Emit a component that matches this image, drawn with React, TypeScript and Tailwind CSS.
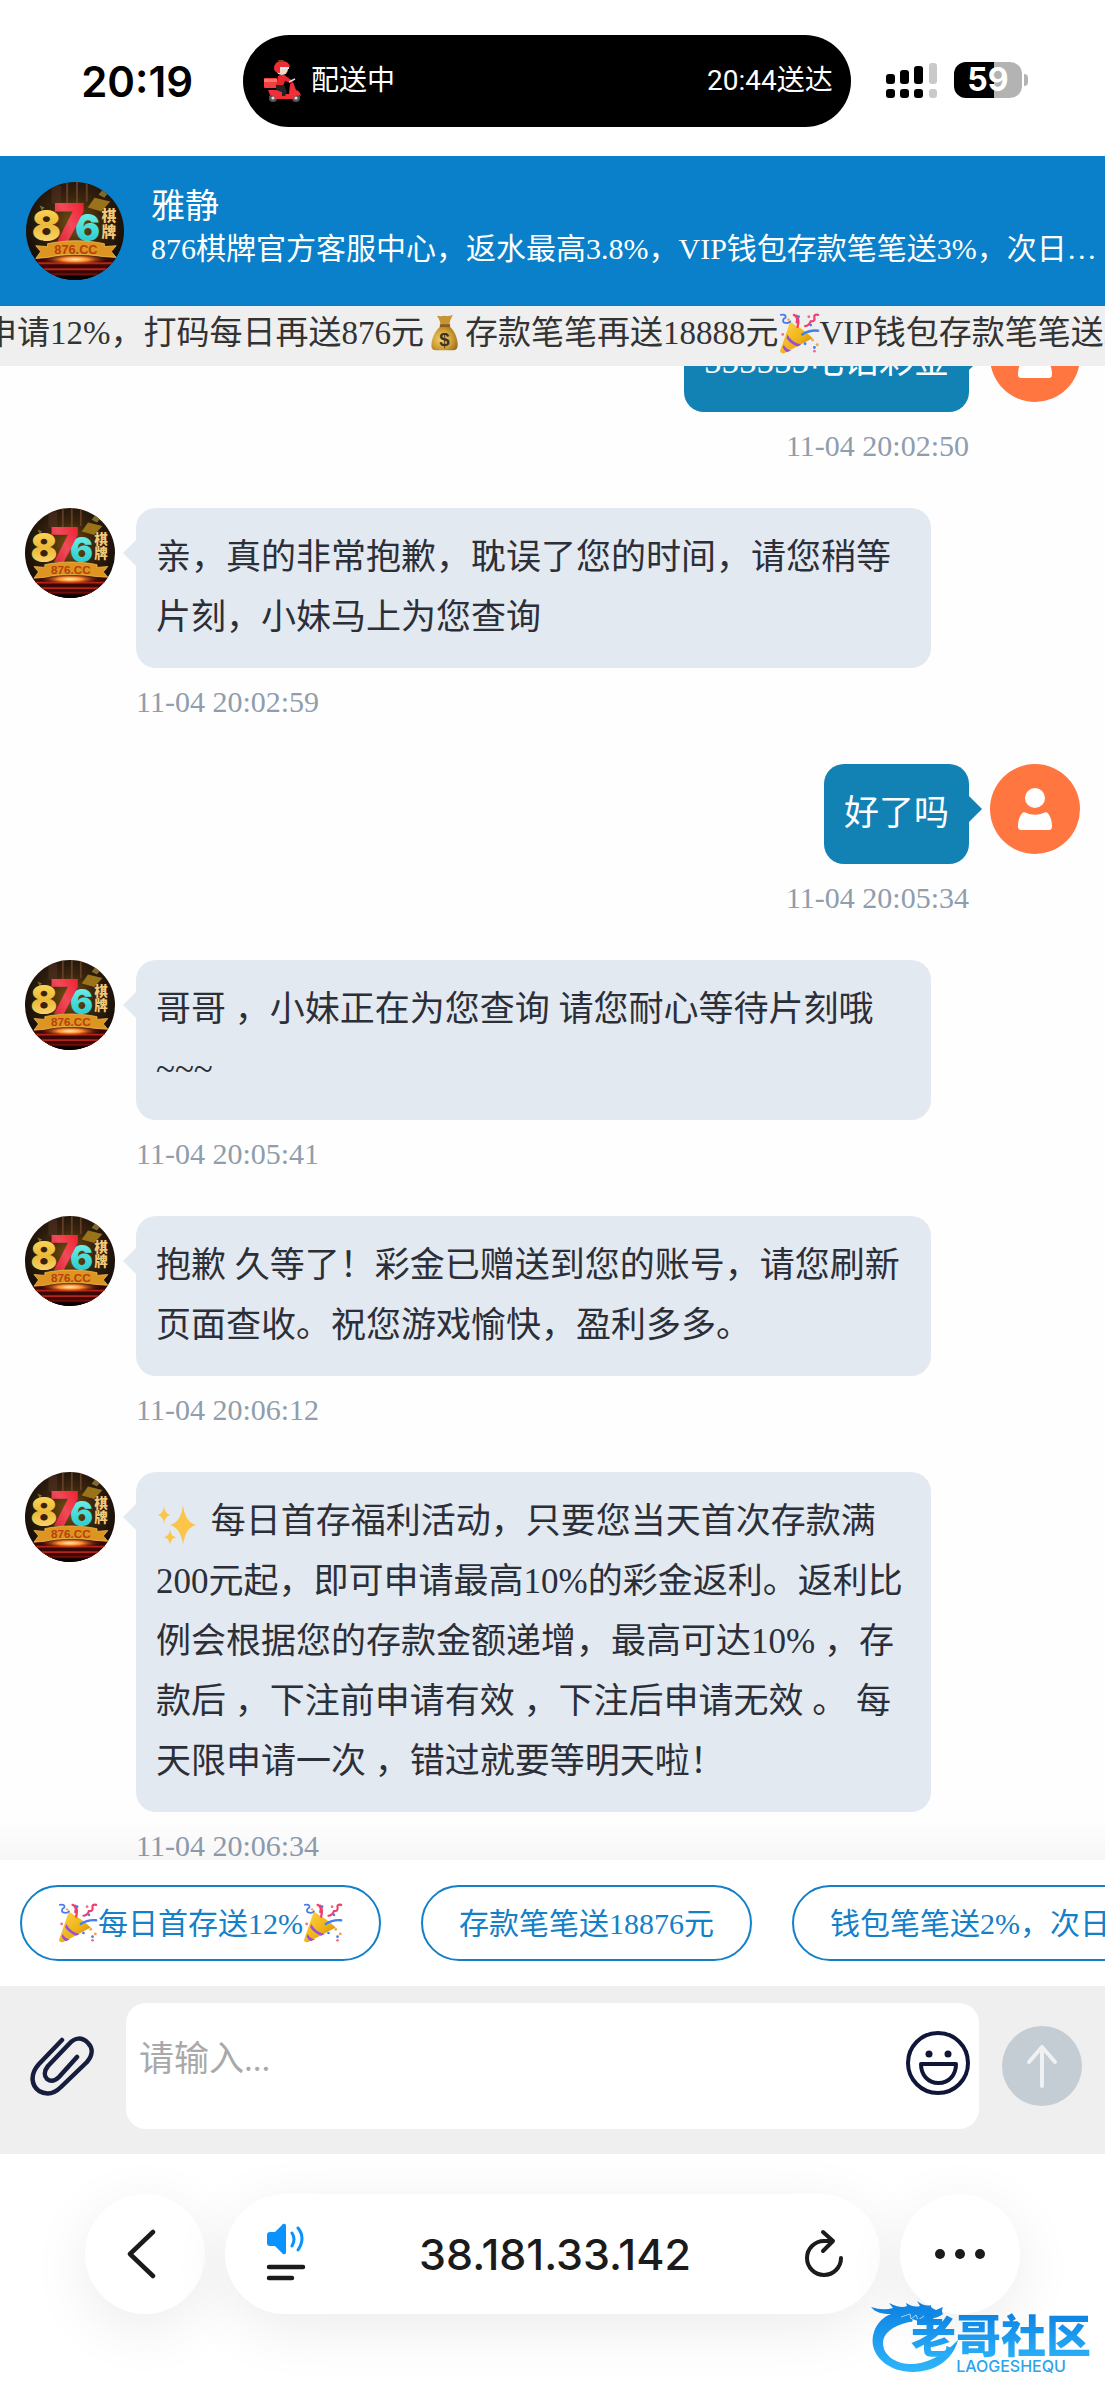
import React from "react";

const SERIF = "font-['Liberation_Serif','Noto_Sans_CJK_SC',serif]";
const SANS = "font-['Inter','Noto_Sans_CJK_SC',sans-serif]";

function BrandAvatar({ className }: { className: string }) {
  return (
    <svg viewBox="10 10 100 100" className={`shrink-0 rounded-full ${className}`} role="img" aria-label="876棋牌">
      <defs>
        <radialGradient id="av-bg" cx="50%" cy="42%" r="60%">
          <stop offset="0" stopColor="#7a5510" />
          <stop offset="0.45" stopColor="#3a240e" />
          <stop offset="1" stopColor="#0d0908" />
        </radialGradient>
        <linearGradient id="av-gold" x1="0" y1="0" x2="0" y2="1">
          <stop offset="0" stopColor="#ffe66a" />
          <stop offset="0.5" stopColor="#ecb838" />
          <stop offset="1" stopColor="#ffe68a" />
        </linearGradient>
        <linearGradient id="av-red" x1="1" y1="0" x2="0" y2="1">
          <stop offset="0" stopColor="#f01226" />
          <stop offset="0.5" stopColor="#f04a58" />
          <stop offset="1" stopColor="#d8122c" />
        </linearGradient>
        <linearGradient id="av-cyan" x1="0" y1="0" x2="0" y2="1">
          <stop offset="0" stopColor="#7ff5ea" />
          <stop offset="1" stopColor="#17c3cc" />
        </linearGradient>
        <radialGradient id="av-glow" cx="50%" cy="50%" r="50%">
          <stop offset="0" stopColor="#fff0b0" />
          <stop offset="0.4" stopColor="#ff8a2a" />
          <stop offset="1" stopColor="#7a1208" stopOpacity="0" />
        </radialGradient>
      </defs>
      <rect x="10" y="10" width="100" height="100" fill="url(#av-bg)" />
      <path d="M52 10v24M62 10v22M72 10v20" stroke="#7b4a30" strokeWidth="2" opacity="0.7" />
      <path d="M36 14h10v18H36z" fill="#5a3326" opacity="0.5" />
      <path d="M80 26l16 4-9 10-14-4z" fill="#9a7318" />
      <path d="M88 18l6 3-4 5-6-3zM24 34l5 2-3 3z" fill="#7d6a2a" />
      <rect x="10" y="88" width="100" height="22" fill="#3a0705" />
      <path d="M20 93h80M22 99h76" stroke="#b5241a" strokeWidth="2" />
      <path d="M28 104h64" stroke="#6d100c" strokeWidth="2" />
      <rect x="10" y="106" width="100" height="5" fill="#060303" />
      <ellipse cx="60" cy="89" rx="34" ry="6" fill="url(#av-glow)" />
      <text x="16" y="70" fontSize="44" fontWeight="900" fill="url(#av-gold)" className="font-['Inter',sans-serif]">8</text>
      <text x="60" y="70" fontSize="38" fontWeight="900" fill="url(#av-cyan)" className="font-['Inter',sans-serif]">6</text>
      <text x="38" y="70" fontSize="54" fontWeight="900" fill="url(#av-red)" className="font-['Inter',sans-serif]">7</text>
      <text x="87" y="50" fontSize="15" fontWeight="900" fill="#f3c878" className="font-['Noto_Sans_CJK_SC',sans-serif]">棋</text>
      <text x="87" y="66" fontSize="15" fontWeight="900" fill="#f3c878" className="font-['Noto_Sans_CJK_SC',sans-serif]">牌</text>
      <path d="M20 75l12 1v-3c18-4 40-4 58 0v3l12-1-5 6 5 6-14-1c-18-3-40-3-56 1l-12 1 5-7z" fill="#dd9420" stroke="#f7c85a" strokeWidth="0.8" />
      <text x="61" y="83" textAnchor="middle" fontSize="13" fontWeight="900" fill="#b8400c" className="font-['Liberation_Sans',sans-serif]">876.CC</text>
    </svg>
  );
}

function UserAvatar() {
  return (
    <svg viewBox="0 0 90 90" className="size-[90px] shrink-0 rounded-full" role="img" aria-label="我">
      <rect width="90" height="90" fill="#ff7640" />
      <circle cx="45" cy="34" r="10" fill="#fff" />
      <path d="M33 48.500c-3 2-5 8-5 14 0 2 1 3.500 3 3.500h28c2 0 3-1.500 3-3.500 0-6-2-12-5-14-1-.6-2-.4-3 .3-5 2.600-13 2.600-18 0-1-.7-2-.9-3-.3z" fill="#fff" />
    </svg>
  );
}

function PartyPopper({ className }: { className: string }) {
  return (
    <svg viewBox="0 0 44 44" className={`shrink-0 ${className}`} role="img" aria-label="庆祝">
      <defs>
        <linearGradient id="pp-cone" x1="0" y1="0" x2="1" y2="1">
          <stop offset="0" stopColor="#ffd84a" />
          <stop offset="0.6" stopColor="#eeb016" />
          <stop offset="1" stopColor="#b97a10" />
        </linearGradient>
      </defs>
      <path d="M12 9Q18 14 24 17Q32 23 36 27L6 43Q2 44 1 41Z" fill="url(#pp-cone)" />
      <path d="M9 23Q14 32 24 34l-4 2Q12 33 8 27zM5 34q3 5 8 6l-4 2q-3-1-5-5z" fill="#9a4fd8" />
      <path d="M2 2q6-1 5 3-4 2-2 5 5 2 7-1" fill="none" stroke="#4a7bea" strokeWidth="2" strokeLinecap="round" />
      <path d="M16 2q5 2 3 8M19 3q3 4 1 12" fill="none" stroke="#ef3f6a" strokeWidth="2.500" strokeLinecap="round" />
      <path d="M42 2q-5-1-4 3t-4 4q-2 5-6 5" fill="none" stroke="#ef3f6a" strokeWidth="2.400" strokeLinecap="round" />
      <path d="M25 23q8-5 17-4" fill="none" stroke="#3f7fef" strokeWidth="2.600" strokeLinecap="round" />
      <g fill="#4a7bea"><circle cx="21" cy="4" r="1.500" /><circle cx="34" cy="13" r="1.500" /><circle cx="28" cy="33" r="1.500" /><circle cx="38" cy="37" r="1.500" /></g>
      <g fill="#f06a94"><circle cx="32" cy="4" r="1.500" /><circle cx="4" cy="23" r="1.500" /><circle cx="38" cy="41" r="1.500" /></g>
      <g fill="#f5a54a"><circle cx="36" cy="29" r="1.600" /><circle cx="41" cy="34" r="1.600" /><circle cx="10" cy="7" r="1.300" /></g>
    </svg>
  );
}

function MoneyBag() {
  return (
    <svg viewBox="0 0 44 44" className="size-[41px] shrink-0" role="img" aria-label="钱袋">
      <defs>
        <radialGradient id="mb" cx="40%" cy="55%" r="65%">
          <stop offset="0" stopColor="#f2d46a" />
          <stop offset="0.600" stopColor="#cf9f38" />
          <stop offset="1" stopColor="#9a6d1c" />
        </radialGradient>
      </defs>
      <path d="M14 3q4 1 8 0 5 1 9-1-3 5-4 11h-9Q17 7 14 3z" fill="#c59434" />
      <path d="M18 14h9c6 5 10 15 9 22-.500 3-2 4-5 4H13c-3 0-4.500-1-5-4-.500-8 4-17 10-22z" fill="url(#mb)" />
      <path d="M17 12h11v3H17z" fill="#8d5f1c" />
      <text x="22" y="35" textAnchor="middle" fontSize="20" fontWeight="700" fill="#3d3426" className="font-['Liberation_Sans',sans-serif]">$</text>
    </svg>
  );
}

function Sparkles() {
  return (
    <svg viewBox="0 0 44 40" className="mr-0.5 inline-block h-10 w-11 align-middle" role="img" aria-label="闪光">
      <g fill="#fcc54a">
        <path d="M27 0q2 17 13 20-11 3-13 20-2-17-13-20Q25 17 27 0z" />
        <path d="M8 1q.500 7 6 9-5.500 2-6 9-.500-7-6-9 5.500-2 6-9z" />
        <path d="M14 24q.500 7 6 8-5.500 2-6 8-.500-6-6-8 5.500-1 6-8z" />
      </g>
    </svg>
  );
}

function Courier() {
  return (
    <svg viewBox="0 0 38 44" className="h-11 w-[38px] shrink-0" aria-hidden="true">
      <rect x="1" y="19" width="13" height="10" rx="1" fill="#f0403f" />
      <path d="M1 20h13v3H1z" fill="#ff7468" />
      <circle cx="10" cy="39" r="4" fill="#555" /><circle cx="10" cy="39" r="1.600" fill="#ddd" />
      <circle cx="33" cy="39" r="4" fill="#555" /><circle cx="33" cy="39" r="1.600" fill="#ddd" />
      <path d="M5 31h12l4 4h5l1-10 3-2 3 8q4 1 5 6-5-3-8 3H12q0-4-5-4z" fill="#ef3038" />
      <path d="M15 17q6-3 9 1l6 4-2 2-6-2-2 5h-7z" fill="#e8262e" />
      <path d="M13 26h8l3 7-2 4h-3v-4l-6-2z" fill="#222" />
      <ellipse cx="19" cy="10" rx="6" ry="6" fill="#f9d8c6" />
      <path d="M11 10q0-8 8-8 7 0 8 6l-10 0v6q-5 0-6-4z" fill="#ee2c33" />
      <path d="M17 8h9v2h-9z" fill="#dce9f0" />
      <path d="M15 1h6l-1 2h-4z" fill="#7a4a12" />
      <path d="M26 23l6-3" stroke="#ddd" strokeWidth="1.500" />
    </svg>
  );
}

function StatusBar() {
  return (
    <div className={`flex h-[156px] items-start text-black ${SANS}`}>
      <div className="flex w-[22%] justify-end pr-[50px] pt-[58px] text-[42px] leading-[48px] font-semibold">20:19</div>
      <div className="mt-[35px] flex h-[92px] w-[55%] items-center justify-between rounded-full bg-black pl-5 pr-[18px] text-[28px] text-white font-['Roboto','Noto_Sans_CJK_SC',sans-serif]">
        <span className="flex items-center gap-2.5"><Courier />配送中</span>
        <span>20:44送达</span>
      </div>
      <div className="flex flex-1 items-center gap-4 pl-[35px] pt-[62px]">
        <svg viewBox="0 0 52 36" className="h-9 w-[52px] shrink-0" role="img" aria-label="信号">
          <g fill="#000">
            <rect x="0" y="12" width="9" height="10" rx="3" /><rect x="14" y="8" width="9" height="14" rx="3" /><rect x="28" y="4" width="9" height="18" rx="3" />
            <rect x="0" y="27" width="9" height="9" rx="3" /><rect x="14" y="27" width="9" height="9" rx="3" /><rect x="28" y="27" width="9" height="9" rx="3" />
          </g>
          <g fill="#c9c9c9"><rect x="43" y="1" width="8" height="21" rx="3" /><rect x="43" y="27" width="8" height="9" rx="3" /></g>
        </svg>
        <div className="flex items-center gap-0.5">
          <div className="flex h-9 w-[68px] items-center justify-center rounded-xl bg-linear-to-r from-black from-59% to-[#b3b3b3] to-59% text-[32px] font-bold text-white">59</div>
          <div className="h-3 w-1 rounded-r-full bg-[#b3b3b3]" />
        </div>
      </div>
    </div>
  );
}

function ChatHeader() {
  return (
    <header className="flex h-[150px] items-center gap-[27px] bg-[#0a80ca] pl-[26px] text-white">
      <BrandAvatar className="size-[98px]" />
      <div className="min-w-0 flex-1 pb-2">
        <h1 className="text-[34px] leading-[44px]">雅静</h1>
        <p className="truncate text-[30px] leading-[40px]">876棋牌官方客服中心，返水最高3.8%，VIP钱包存款笔笔送3%，次日…</p>
      </div>
    </header>
  );
}

function Ticker() {
  return (
    <div className="h-[60px] overflow-hidden bg-[#efefef] text-[33px] leading-[52px] text-[#333]">
      <div className="-ml-4 flex h-[54px] items-center whitespace-nowrap">
        <span>申请12%，打码每日再送876元</span>
        <MoneyBag />
        <span>存款笔笔再送18888元</span>
        <PartyPopper className="size-[41px]" />
        <span>VIP钱包存款笔笔送2</span>
      </div>
    </div>
  );
}

function Incoming({ time, children }: { time: string; children: React.ReactNode }) {
  return (
    <li className="flex items-start gap-[21px] pr-[174px] pl-[25px]">
      <BrandAvatar className="size-[90px]" />
      <div className="min-w-0">
        <div className="relative rounded-[20px] bg-[#e2e9f1] p-5 text-[35px] leading-[60px] text-[#2c2f38]">
          <svg viewBox="0 0 14 28" className="absolute -left-[13px] top-[31px] h-7 w-3.5" aria-hidden="true"><path d="M14 0v28L0 14z" fill="#e2e9f1" /></svg>
          {children}
        </div>
        <time className="mt-4 block text-[30px] leading-[36px] text-[#8f9dad]">{time}</time>
      </div>
    </li>
  );
}

function Outgoing({ time, children }: { time: string; children: React.ReactNode }) {
  return (
    <li className="flex items-start justify-end gap-[21px] pr-[25px]">
      <div className="flex flex-col items-end">
        <div className="relative rounded-[20px] bg-[#1282b5] p-5 text-[35px] leading-[60px] text-white">
          {children}
          <svg viewBox="0 0 14 28" className="absolute -right-[13px] top-[31px] h-7 w-3.5" aria-hidden="true"><path d="M0 0v28L14 14z" fill="#1282b5" /></svg>
        </div>
        <time className="mt-4 block text-[30px] leading-[36px] text-[#8f9dad]">{time}</time>
      </div>
      <UserAvatar />
    </li>
  );
}

function QuickReplies() {
  const pill = "flex h-[76px] shrink-0 items-center rounded-full border-2 border-[#1480c8] px-9 text-[30px] whitespace-nowrap";
  return (
    <nav className="relative flex h-[126px] items-center gap-10 overflow-x-hidden bg-white pl-5 text-[#1480c8]" aria-label="快捷回复">
      <button className={pill}><PartyPopper className="size-10" />每日首存送12%<PartyPopper className="size-10" /></button>
      <button className={pill}>存款笔笔送18876元</button>
      <button className={pill}>钱包笔笔送2%，次日</button>
    </nav>
  );
}

function Composer() {
  return (
    <form className="flex items-center bg-[#efefef] pt-[17px] pr-[23px] pb-[25px] pl-[30px]" onSubmit={(e) => e.preventDefault()}>
      <button type="button" aria-label="附件" className="mr-8 shrink-0">
        <svg viewBox="0 0 64 60" className="h-[60px] w-16" fill="none" stroke="#171d3c" strokeWidth="4.500" strokeLinecap="round" strokeLinejoin="round">
          <path d="M32 4L9 28C-1 39 2 50 9 55c7 4 15 3 22-4L57 26c6-7 6-14 1-19C52 1 45 1 39 8L18 30c-4 5-4 10-1 13 4 3 8 2 12-2L47 21" />
        </svg>
      </button>
      <div className="flex h-[126px] min-w-0 flex-1 items-center rounded-[20px] bg-white pr-2 pl-[13px]">
        <input aria-label="请输入" placeholder="请输入..." className="h-full min-w-0 flex-1 bg-transparent pb-3 text-[35px] outline-none placeholder:text-[#a9a9a9]" />
        <button type="button" aria-label="表情" className="shrink-0 pb-1.5">
          <svg viewBox="0 0 66 66" className="size-[66px]" fill="none" stroke="#0f1638" strokeWidth="4">
            <circle cx="33" cy="33" r="30" />
            <path d="M16 34h35c0 11-7 19-17.500 19S16 45 16 34z" strokeLinejoin="round" />
            <circle cx="24" cy="24" r="3.500" fill="#0f1638" stroke="none" /><circle cx="43" cy="24" r="3.500" fill="#0f1638" stroke="none" />
          </svg>
        </button>
      </div>
      <button type="submit" aria-label="发送" className="ml-[23px] flex size-20 shrink-0 items-center justify-center rounded-full bg-[#c4ccd4]">
        <svg viewBox="0 0 32 44" className="h-11 w-8" fill="none" stroke="#f0f1f2" strokeWidth="4" strokeLinecap="round" strokeLinejoin="round"><path d="M16 42V3M3 18L16 3l13 15" /></svg>
      </button>
    </form>
  );
}

function Watermark() {
  return (
    <div className="absolute right-[14px] bottom-[26px] flex items-end">
      <svg viewBox="0 0 90 74" className="-mr-[50px] h-[74px] w-[90px]" aria-hidden="true">
        <defs>
          <linearGradient id="wm" x1="0" y1="0" x2="0" y2="1"><stop offset="0" stopColor="#0a7fe0" /><stop offset="1" stopColor="#2eb6fb" /></linearGradient>
        </defs>
        <path d="M0 7q12 4 22 1L18 3q12 6 18 3l-1-3q8 5 14 3L46 1q8 6 14 4-1 3 5 5l7-3q-2 4 0 7-6 5-14 4l11 3q-12 4-22 0l-6-2q2 3-3 3C17 27 9 37 13 49c7 18 42 25 74-9-7 26-33 35-55 31C10 67-3 49 3 32 6 23 12 17 20 14 11 14 5 13 0 7z" fill="url(#wm)" />
        <path d="M30 17l9-3 1 5 5-4 2 5 6-4" fill="none" stroke="#fff" strokeWidth="1" opacity="0.600" />
      </svg>
      <div className="flex flex-col items-center">
        <span className="bg-linear-to-b from-[#0a7fe0] to-[#2bb0f8] bg-clip-text text-[45px] leading-[48px] font-black text-transparent font-['Noto_Sans_CJK_SC',sans-serif]">老哥社区</span>
        <span className={`pl-5 text-[16px] leading-[16px] font-medium text-[#2ba4ef] ${SANS}`}>LAOGESHEQU</span>
      </div>
    </div>
  );
}

function BrowserBar() {
  const shadow = "bg-white shadow-[0_14px_60px_rgba(0,0,0,0.08)]";
  return (
    <footer className={`relative flex h-[246px] items-start gap-5 overflow-hidden bg-white px-[85px] pt-10 text-[#1b1b1b] ${SANS}`}>
      <button aria-label="返回" className={`flex size-[120px] shrink-0 items-center justify-center rounded-full ${shadow}`}>
        <svg viewBox="0 0 50 50" className="size-[50px]" fill="none" stroke="currentColor" strokeWidth="4.500" strokeLinecap="round" strokeLinejoin="round"><path d="M33 3L10 25l23 22" /></svg>
      </button>
      <div className={`flex h-[120px] min-w-0 flex-1 items-center justify-between rounded-full pr-[36px] pl-[41px] ${shadow}`}>
        <button aria-label="页面菜单" className="pb-1">
          <svg viewBox="0 0 40 58" className="h-[58px] w-10">
            <path d="M1 12q0-3 3-3h5l7-7q1-2 3-1 1 0 1 2v26q0 2-1 2-2 1-3-1l-7-7H4q-3 0-3-3z" fill="#0a93ff" />
            <path d="M26 10q4 6 0 13M32 5q8 10 0 22" fill="none" stroke="#0a93ff" strokeWidth="3" strokeLinecap="round" />
            <path d="M3 44h34M3 55h23" stroke="currentColor" strokeWidth="4.500" strokeLinecap="round" />
          </svg>
        </button>
        <span className="text-[43px] font-medium">38.181.33.142</span>
        <button aria-label="刷新">
          <svg viewBox="0 0 40 50" className="h-[50px] w-10" fill="none" stroke="currentColor" strokeWidth="4" strokeLinecap="round" strokeLinejoin="round"><path d="M37 29a17 17 0 1 1-17-17h8M19 3l10 9-10 10" /></svg>
        </button>
      </div>
      <button aria-label="更多" className={`flex size-[120px] shrink-0 items-center justify-center gap-2.5 rounded-full ${shadow}`}>
        <span className="size-2.5 rounded-full bg-current" /><span className="size-2.5 rounded-full bg-current" /><span className="size-2.5 rounded-full bg-current" />
      </button>
      <Watermark />
    </footer>
  );
}

export default function App() {
  return (
    <div className={`overflow-x-hidden bg-white ${SERIF}`}>
      <StatusBar />
      <ChatHeader />
      <Ticker />
      <main className="relative overflow-hidden bg-[#fefefe]">
        <ul className="-mt-[54px] -mb-1 flex flex-col gap-11">
          <Outgoing time="11-04 20:02:50">555555电话彩金</Outgoing>
          <Incoming time="11-04 20:02:59">亲，真的非常抱歉，耽误了您的时间，请您稍等片刻，小妹马上为您查询</Incoming>
          <Outgoing time="11-04 20:05:34">好了吗</Outgoing>
          <Incoming time="11-04 20:05:41">哥哥 ，小妹正在为您查询 请您耐心等待片刻哦~~~</Incoming>
          <Incoming time="11-04 20:06:12">抱歉 久等了！彩金已赠送到您的账号，请您刷新页面查收。祝您游戏愉快，盈利多多。</Incoming>
          <Incoming time="11-04 20:06:34"><Sparkles /> 每日首存福利活动，只要您当天首次存款满200元起，即可申请最高10%的彩金返利。返利比例会根据您的存款金额递增，最高可达10% ，存款后 ，下注前申请有效 ，下注后申请无效 。 每天限申请一次 ，错过就要等明天啦！</Incoming>
        </ul>
        <div className="pointer-events-none absolute inset-x-0 bottom-0 h-10 bg-linear-to-t from-black/3 to-transparent" />
      </main>
      <QuickReplies />
      <Composer />
      <BrowserBar />
    </div>
  );
}
